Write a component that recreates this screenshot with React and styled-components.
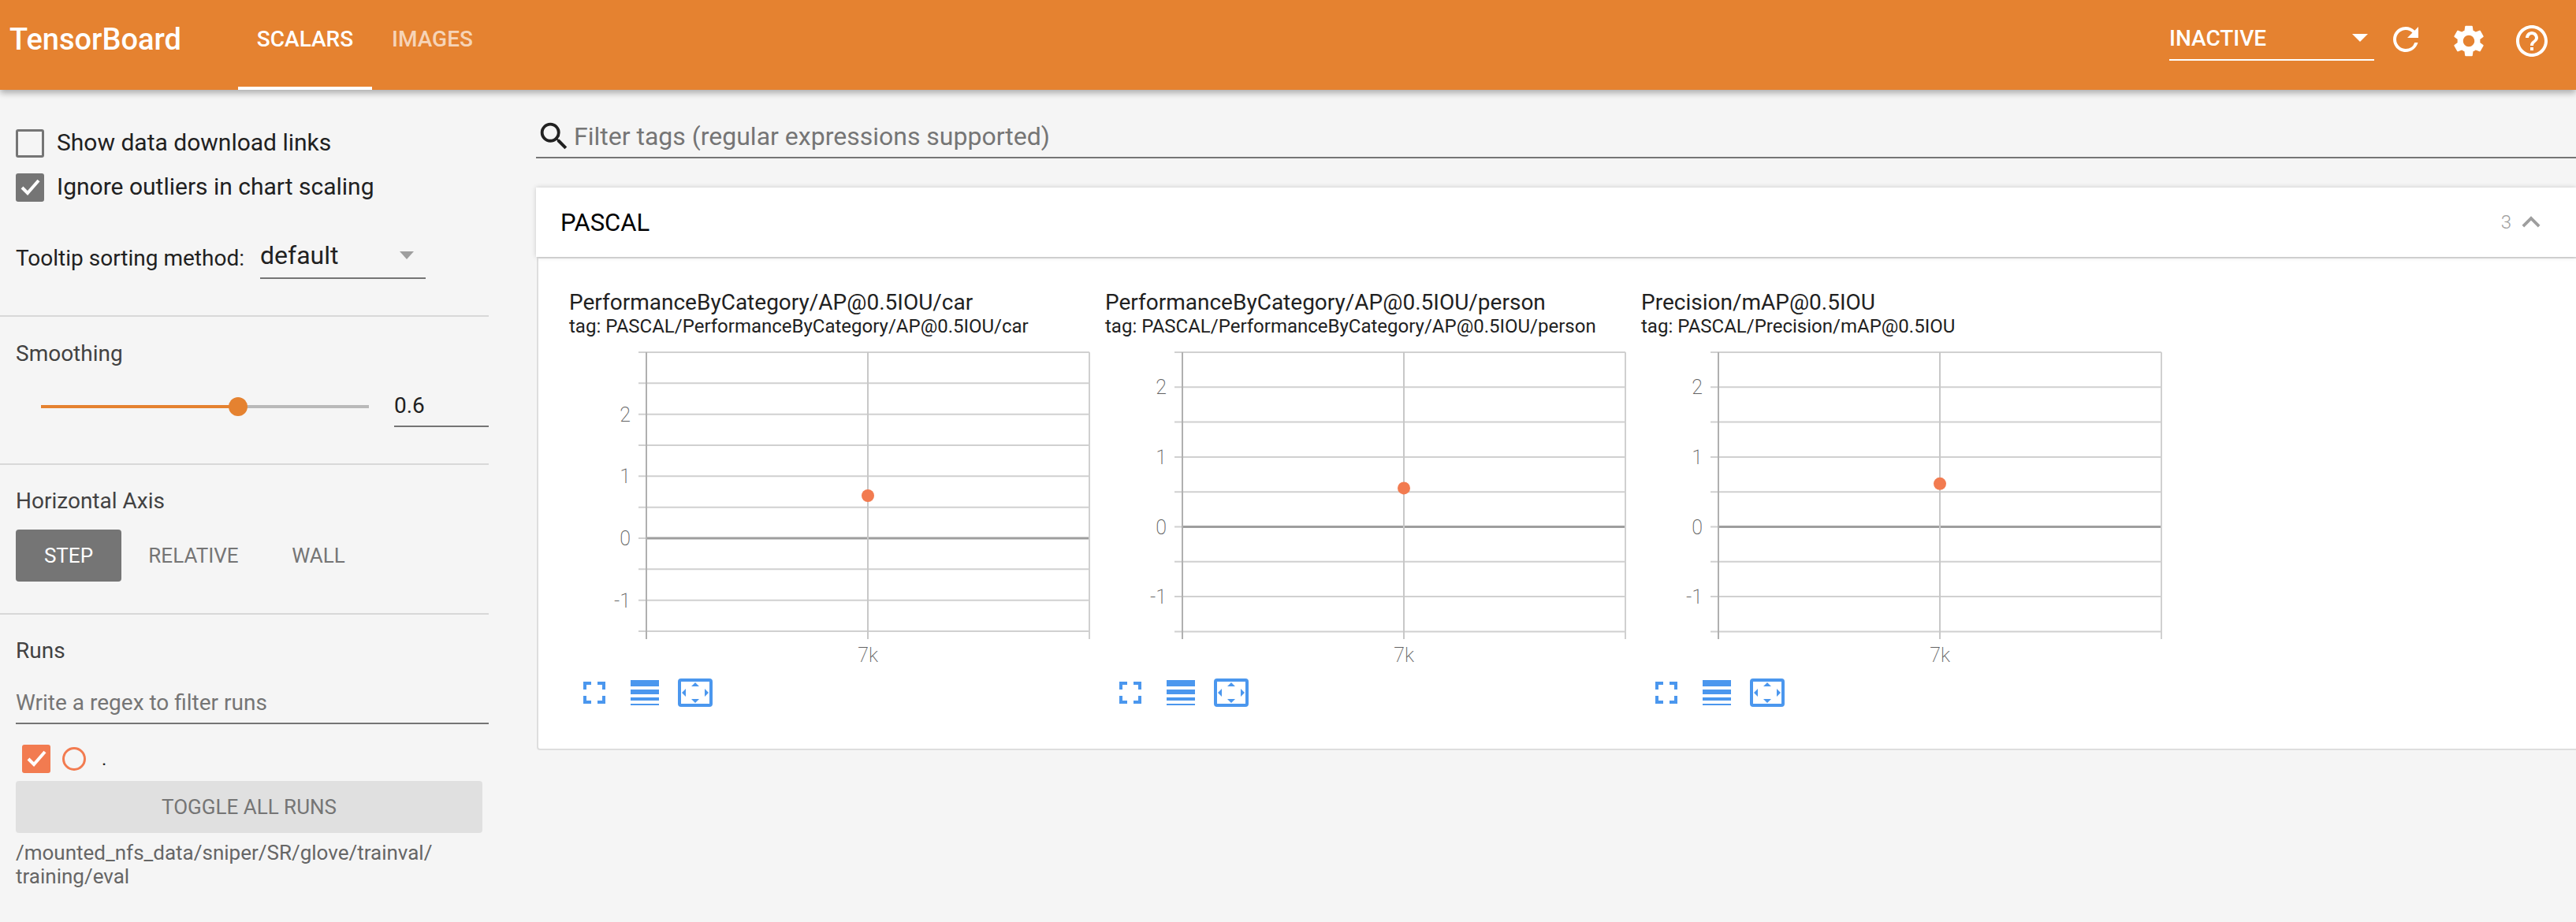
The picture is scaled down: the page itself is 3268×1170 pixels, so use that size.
import React from "react";
import styled, { createGlobalStyle } from "styled-components";
import { MdExpandLess, MdHelpOutline, MdRefresh, MdSearch, MdSettings } from "react-icons/md";

const ORANGE = "#e58230";
const RUN = "#f27b50";
const BLUE = "#4b97ee";

const GlobalStyle = createGlobalStyle`
  html, body {
    margin: 0;
    padding: 0;
    background: #f5f5f5;
    font-family: Roboto, "Liberation Sans", sans-serif;
    overflow: hidden;
  }
`;

const Page = styled.div`
  width: 3268px;
  height: 1170px;
  display: flex;
  flex-direction: column;
  overflow: hidden;
`;

const Toolbar = styled.header`
  height: 114px;
  flex: none;
  display: flex;
  align-items: stretch;
  background: ${ORANGE};
  color: #fff;
  box-shadow: 0 4px 8px rgba(0, 0, 0, 0.3);
  position: relative;
  z-index: 2;
`;

const Brand = styled.div`
  width: 302px;
  padding-left: 12px;
  box-sizing: border-box;
  font-size: 38px;
  font-weight: 500;
  line-height: 100px;
`;

const Tab = styled.div`
  width: ${(p) => p.$width}px;
  text-align: center;
  font-size: 28px;
  font-weight: 500;
  line-height: 100px;
  box-sizing: border-box;
  color: ${(p) => (p.$active ? "#fff" : "rgba(255,255,255,0.67)")};
  border-bottom: ${(p) => (p.$active ? "4px solid #fff" : "none")};
`;

const ToolbarRight = styled.div`
  margin-left: auto;
  display: flex;
  align-items: flex-start;
  padding-right: 32px;
`;

const RunSelect = styled.div`
  width: 260px;
  height: 77px;
  box-sizing: border-box;
  border-bottom: 2px solid #fff;
  display: flex;
  align-items: center;
  justify-content: space-between;
  padding: 21px 8px 0 0;
  font-size: 28px;
  font-weight: 500;
`;

const Caret = styled.span`
  width: 0;
  height: 0;
  border-left: ${(p) => p.$size}px solid transparent;
  border-right: ${(p) => p.$size}px solid transparent;
  border-top: 10px solid ${(p) => p.$color};
  margin-right: ${(p) => p.$right || 0}px;
`;

const ToolIcon = styled.span`
  display: flex;
  margin-left: ${(p) => p.$left}px;
  margin-top: ${(p) => p.$top}px;
`;

const Body = styled.div`
  flex: 1;
  display: flex;
  min-height: 0;
`;

const Sidebar = styled.aside`
  width: 620px;
  flex: none;
`;

const Section = styled.section`
  height: ${(p) => p.$height}px;
  box-sizing: border-box;
  padding: ${(p) => p.$pad || "0"};
  border-bottom: ${(p) => (p.$last ? "none" : "2px solid #d8d8d8")};
`;

const CheckRow = styled.label`
  display: flex;
  align-items: center;
  height: 36px;
  margin-bottom: 20px;
  font-size: 30px;
  color: #212121;
  padding-left: 20px;
`;

const CheckText = styled.span`
  margin-top: -3px;
`;

const Box = styled.span`
  width: 36px;
  height: 36px;
  flex: none;
  box-sizing: border-box;
  border-radius: 3px;
  border: ${(p) => (p.$checked ? "none" : "3px solid #757575")};
  background: ${(p) => (p.$checked ? p.$color : "transparent")};
  margin-right: ${(p) => p.$right}px;
  display: flex;
  align-items: center;
  justify-content: center;
`;

const TooltipRow = styled.div`
  display: flex;
  align-items: flex-end;
  padding-left: 20px;
  margin-top: 40px;
  font-size: 28px;
  color: #212121;
`;

const TooltipLabel = styled.span`
  width: 310px;
  line-height: 38px;
  margin-bottom: 7px;
`;

const Select = styled.div`
  width: 210px;
  height: 58px;
  box-sizing: border-box;
  border-bottom: 2px solid #757575;
  display: flex;
  align-items: center;
  justify-content: space-between;
  font-size: 32px;
`;

const SectionTitle = styled.div`
  font-size: 28px;
  color: #424242;
  line-height: 34px;
  padding-left: 20px;
`;

const SliderRow = styled.div`
  display: flex;
  align-items: flex-end;
  padding-left: 52px;
  margin-top: 20px;
`;

const Track = styled.div`
  width: 416px;
  height: 4px;
  background: #b9b9b9;
  margin-bottom: 24px;
  position: relative;
`;

const TrackFill = styled.div`
  height: 100%;
  background: ${ORANGE};
`;

const Thumb = styled.span`
  position: absolute;
  top: -10px;
  width: 24px;
  height: 24px;
  margin-left: -12px;
  border-radius: 50%;
  background: ${ORANGE};
`;

const SmoothValue = styled.div`
  width: 120px;
  margin-left: 32px;
  height: 56px;
  box-sizing: border-box;
  border-bottom: 2px solid #757575;
  font-size: 28px;
  line-height: 58px;
  color: #212121;
`;

const AxisButtons = styled.div`
  display: flex;
  padding-left: 20px;
  margin-top: 19px;
`;

const AxisButton = styled.div`
  height: 66px;
  width: ${(p) => p.$width}px;
  line-height: 66px;
  text-align: center;
  border-radius: 4px;
  font-size: 26px;
  color: ${(p) => (p.$active ? "#fff" : "#757575")};
  background: ${(p) => (p.$active ? "#757575" : "transparent")};
`;

const RegexInput = styled.div`
  margin: 30px 0 0 20px;
  height: 44px;
  border-bottom: 2px solid #757575;
  font-size: 28px;
  line-height: 38px;
  color: #757575;
`;

const RunRow = styled.div`
  display: flex;
  align-items: center;
  height: 36px;
  margin: 26px 0 10px 28px;
  font-size: 24px;
  color: #212121;
`;

const RunCircle = styled.span`
  width: 30px;
  height: 30px;
  box-sizing: border-box;
  border: 3px solid ${RUN};
  border-radius: 50%;
  margin-right: 20px;
`;

const ToggleButton = styled.div`
  margin-left: 20px;
  width: 592px;
  height: 66px;
  line-height: 66px;
  text-align: center;
  background: #e0e0e0;
  border-radius: 4px;
  color: #757575;
  font-size: 26px;
`;

const RunPath = styled.div`
  margin: 10px 0 0 20px;
  font-size: 26px;
  line-height: 30px;
  color: #666;
`;

const Main = styled.main`
  flex: 1;
  min-width: 0;
  padding: 0 0 0 60px;
`;

const FilterBar = styled.div`
  margin-top: 36px;
  height: 51px;
  box-sizing: border-box;
  border-bottom: 2px solid #757575;
  display: flex;
  align-items: center;
  gap: 2px;
  padding-bottom: 4px;
  font-size: 32px;
  color: #757575;
  svg {
    color: #212121;
  }
`;

const Pane = styled.div`
  margin-top: 37px;
`;

const PaneHeader = styled.div`
  height: 88px;
  background: #fff;
  display: flex;
  align-items: center;
  justify-content: space-between;
  padding: 0 34px 0 31px;
  font-size: 31px;
  color: #000;
  box-shadow: 0 0 6px rgba(0, 0, 0, 0.18);
  position: relative;
`;

const PaneCount = styled.div`
  display: flex;
  align-items: center;
  gap: 2px;
  font-size: 24px;
  font-weight: 300;
  color: #9e9e9e;
`;

const Cards = styled.div`
  margin-left: 1px;
  height: 626px;
  box-sizing: border-box;
  background: #fff;
  border: 2px solid #dedede;
  border-right: none;
  border-radius: 0 0 0 4px;
  display: flex;
  padding: 39px 0 0 39px;
`;

const Card = styled.div`
  width: 680px;
  flex: none;
`;

const CardTitle = styled.div`
  font-size: 28px;
  line-height: 34px;
  color: #212121;
`;

const CardTag = styled.div`
  font-size: 24px;
  line-height: 26px;
  color: #212121;
`;

const ChartSvg = styled.svg`
  display: block;
  margin-top: 19px;
  text {
    font-family: Roboto, sans-serif;
    font-size: 25px;
    font-weight: 200;
    fill: #616161;
  }
`;

const CardIcons = styled.div`
  display: flex;
  align-items: center;
  margin: 9px 0 0 18px;
`;

const IconSlot = styled.span`
  display: flex;
  margin-right: ${(p) => p.$right}px;
`;

function Check() {
  return (
    <svg width="28" height="28" viewBox="0 0 28 28">
      <path d="M4 14 L11 21 L25 5" fill="none" stroke="#fff" strokeWidth="4" />
    </svg>
  );
}

function Chart({ zero, step, dotY }) {
  // svg y 0 is the top gridline, the plot runs down to 354
  const lines = [];
  for (let i = -Math.round(zero / step); zero + i * step <= 355; i++) {
    lines.push(zero + i * step);
  }
  const labels = [2, 1, 0, -1];
  const x0 = 98;
  const right = 660;
  const mid = 379;
  return (
    <ChartSvg width="664" height="406" viewBox="0 0 664 406">
      <g transform="translate(0,1)">
        {lines.map((y) => (
          <line key={y} x1={x0 - 10} x2={right} y1={y} y2={y} stroke="#d0d0d0" strokeWidth="2" />
        ))}
        <line x1={x0} x2={right} y1={zero} y2={zero} stroke="#9e9e9e" strokeWidth="3" />
        <line x1={x0} x2={x0} y1="0" y2="364" stroke="#b0b0b0" strokeWidth="2" />
        <line x1={mid} x2={mid} y1="0" y2="364" stroke="#c8c8c8" strokeWidth="2" />
        <line x1={right} x2={right} y1="0" y2="364" stroke="#d0d0d0" strokeWidth="2" />
        <circle cx={mid} cy={dotY} r="8" fill={RUN} />
        {labels.map((v) => (
          <text key={v} x={x0 - 20} y={zero - v * step * 2 + 9} textAnchor="end">
            {v}
          </text>
        ))}
        <text x={mid} y="393" textAnchor="middle">7k</text>
      </g>
    </ChartSvg>
  );
}

function FullscreenIcon() {
  return (
    <svg width="28" height="28" viewBox="0 0 28 28" fill={BLUE}>
      <path d="M0 0h10v4H4v6H0zM18 0h10v10h-4V4h-6zM0 18h4v6h6v4H0zM24 18h4v10H18v-4h6z" />
    </svg>
  );
}

function LinesIcon() {
  return (
    <svg width="36" height="32" viewBox="0 0 36 32" fill={BLUE}>
      <rect width="36" height="8" />
      <rect y="12" width="36" height="6" />
      <rect y="22" width="36" height="4" />
      <rect y="30" width="36" height="2" />
    </svg>
  );
}

function FitIcon() {
  return (
    <svg width="44" height="36" viewBox="0 0 44 36">
      <rect x="2" y="2" width="40" height="32" rx="2" fill="none" stroke={BLUE} strokeWidth="4" />
      <path d="M22 5l5 5H17zM22 31l-5-5h10zM5 18l5-5v10zM39 18l-5 5V13z" fill={BLUE} />
    </svg>
  );
}

const charts = [
  { title: "PerformanceByCategory/AP@0.5IOU/car", zero: 236, step: 39.33, dotY: 182 },
  { title: "PerformanceByCategory/AP@0.5IOU/person", zero: 221.5, step: 44.3, dotY: 172.4 },
  { title: "Precision/mAP@0.5IOU", zero: 221.5, step: 44.3, dotY: 166.8 },
];

export default function App() {
  return (
    <Page>
      <GlobalStyle />
      <Toolbar>
        <Brand>TensorBoard</Brand>
        <Tab $active $width={170}>SCALARS</Tab>
        <Tab $width={153}>IMAGES</Tab>
        <ToolbarRight>
          <RunSelect>
            INACTIVE
            <Caret $color="#fff" $size={10} />
          </RunSelect>
          <ToolIcon $left={16} $top={26}><MdRefresh size={48} /></ToolIcon>
          <ToolIcon $left={32} $top={28}><MdSettings size={48} /></ToolIcon>
          <ToolIcon $left={32} $top={28}><MdHelpOutline size={48} /></ToolIcon>
        </ToolbarRight>
      </Toolbar>
      <Body>
        <Sidebar>
          <Section $height={288} $pad="50px 0 0">
            <CheckRow>
              <Box $right={16} />
              <CheckText>Show data download links</CheckText>
            </CheckRow>
            <CheckRow>
              <Box $checked $color="#757575" $right={16}><Check /></Box>
              <CheckText>Ignore outliers in chart scaling</CheckText>
            </CheckRow>
            <TooltipRow>
              <TooltipLabel>Tooltip sorting method:</TooltipLabel>
              <Select>
                default
                <Caret $color="#9e9e9e" $size={9} $right={15} />
              </Select>
            </TooltipRow>
          </Section>
          <Section $height={188} $pad="30px 0 0">
            <SectionTitle>Smoothing</SectionTitle>
            <SliderRow>
              <Track>
                <TrackFill style={{ width: "60%" }} />
                <Thumb style={{ left: "60%" }} />
              </Track>
              <SmoothValue>0.6</SmoothValue>
            </SliderRow>
          </Section>
          <Section $height={190} $pad="29px 0 0">
            <SectionTitle>Horizontal Axis</SectionTitle>
            <AxisButtons>
              <AxisButton $active $width={134}>STEP</AxisButton>
              <AxisButton $width={183}>RELATIVE</AxisButton>
              <AxisButton $width={134}>WALL</AxisButton>
            </AxisButtons>
          </Section>
          <Section $height={390} $pad="29px 0 0" $last>
            <SectionTitle>Runs</SectionTitle>
            <RegexInput>Write a regex to filter runs</RegexInput>
            <RunRow>
              <Box $checked $color={RUN} $right={15}><Check /></Box>
              <RunCircle />
              .
            </RunRow>
            <ToggleButton>TOGGLE ALL RUNS</ToggleButton>
            <RunPath>
              /mounted_nfs_data/sniper/SR/glove/trainval/
              <br />
              training/eval
            </RunPath>
          </Section>
        </Sidebar>
        <Main>
          <FilterBar>
            <MdSearch size={46} />
            Filter tags (regular expressions supported)
          </FilterBar>
          <Pane>
            <PaneHeader>
              PASCAL
              <PaneCount>
                3
                <MdExpandLess size={46} />
              </PaneCount>
            </PaneHeader>
            <Cards>
              {charts.map((c) => (
                <Card key={c.title}>
                  <CardTitle>{c.title}</CardTitle>
                  <CardTag>tag: PASCAL/{c.title}</CardTag>
                  <Chart zero={c.zero} step={c.step} dotY={c.dotY} />
                  <CardIcons>
                    <IconSlot $right={32}><FullscreenIcon /></IconSlot>
                    <IconSlot $right={24}><LinesIcon /></IconSlot>
                    <IconSlot $right={0}><FitIcon /></IconSlot>
                  </CardIcons>
                </Card>
              ))}
            </Cards>
          </Pane>
        </Main>
      </Body>
    </Page>
  );
}
